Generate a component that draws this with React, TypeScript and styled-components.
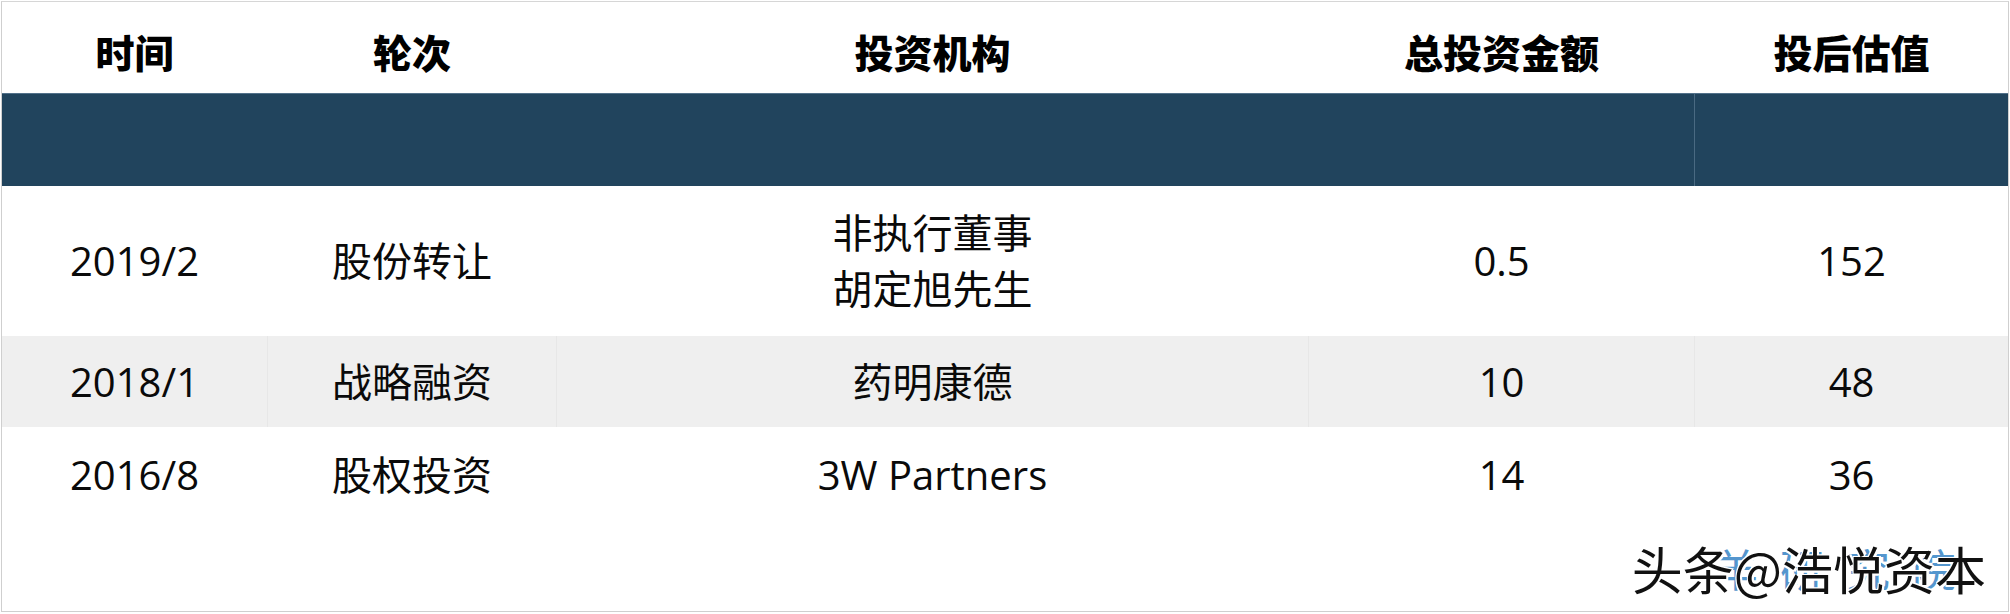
import React from 'react';
import styled, { createGlobalStyle } from 'styled-components';

const GlobalStyle = createGlobalStyle`
  html, body {
    margin: 0;
    padding: 0;
    background: #ffffff;
  }
  body {
    width: 2010px;
    height: 614px;
    overflow: hidden;
    font-family: 'Open Sans', 'Noto Sans CJK SC', sans-serif;
  }
`;

const COLS = '266px 289px 752px 386px 1fr';

const Frame = styled.div`
  position: relative;
  box-sizing: border-box;
  margin: 1px 0 0 1px;
  width: 2008px;
  height: 611px;
  border: 1px solid #cfcfcf;
  border-top-color: #d6d6d6;
  display: flex;
  flex-direction: column;
  background: #ffffff;
`;

const Row = styled.div<{ h: number; bg?: string }>`
  display: grid;
  grid-template-columns: ${COLS};
  height: ${(p) => p.h}px;
  background: ${(p) => p.bg || 'transparent'};
  flex-shrink: 0;
`;

const Band = styled(Row)`
  border-top: 1px solid #52718a;
  box-sizing: border-box;
`;

const Cell = styled.div<{ sep?: string }>`
  display: flex;
  flex-direction: column;
  align-items: center;
  justify-content: center;
  border-right: 1px solid ${(p) => p.sep || 'transparent'};
  &:last-child {
    border-right: none;
  }
`;

const HeadText = styled.span`
  font-family: 'Noto Sans CJK SC', sans-serif;
  font-weight: 900;
  font-size: 39px;
  color: #000;
  line-height: 1;
  margin-top: 8px;
`;

const DataText = styled.span`
  font-family: 'Open Sans', 'Noto Sans CJK SC', sans-serif;
  font-size: 40px;
  color: #0a0a0a;
  line-height: 56px;
  text-align: center;
`;

const Watermark = styled.div`
  position: absolute;
  right: 22px;
  bottom: 15px;
  height: 56px;
`;

const WaterBlue = styled.span`
  position: absolute;
  right: 8px;
  top: 2px;
  font-family: 'Noto Sans CJK SC', sans-serif;
  font-size: 44px;
  line-height: 52px;
  color: #2a7cc2;
  opacity: 0.8;
  letter-spacing: 22px;
  white-space: nowrap;
`;

const WaterBlack = styled.span`
  position: relative;
  font-family: 'Noto Sans CJK SC', sans-serif;
  font-size: 51px;
  line-height: 56px;
  color: #111;
  white-space: nowrap;
  text-shadow: 2px 2px 0 #fff, -1px -1px 0 #fff, 2px -1px 0 #fff, -1px 2px 0 #fff;
`;

const headers = ['时间', '轮次', '投资机构', '总投资金额', '投后估值'];

const rows: { cells: string[][]; h: number; bg?: string; sep?: string }[] = [
  { cells: [['2019/2'], ['股份转让'], ['非执行董事', '胡定旭先生'], ['0.5'], ['152']], h: 150 },
  { cells: [['2018/1'], ['战略融资'], ['药明康德'], ['10'], ['48']], h: 91, bg: '#efefef', sep: '#e7e7e7' },
  { cells: [['2016/8'], ['股权投资'], ['3W Partners'], ['14'], ['36']], h: 96 },
];

export default function App() {
  return (
    <>
      <GlobalStyle />
      <Frame>
        <Row h={91}>
          {headers.map((h) => (
            <Cell key={h}>
              <HeadText>{h}</HeadText>
            </Cell>
          ))}
        </Row>
        <Band h={93} bg="#21445d">
          {headers.map((h, i) => (
            <Cell key={h} sep={i === 3 ? '#4a6a82' : 'transparent'} />
          ))}
        </Band>
        {rows.map((r, ri) => (
          <Row key={ri} h={r.h} bg={r.bg}>
            {r.cells.map((lines, ci) => (
              <Cell key={ci} sep={r.sep}>
                {lines.map((l) => (
                  <DataText key={l}>{l}</DataText>
                ))}
              </Cell>
            ))}
          </Row>
        ))}
        <Watermark>
          <WaterBlue>羊研究院</WaterBlue>
          <WaterBlack>头条@浩悦资本</WaterBlack>
        </Watermark>
      </Frame>
    </>
  );
}
